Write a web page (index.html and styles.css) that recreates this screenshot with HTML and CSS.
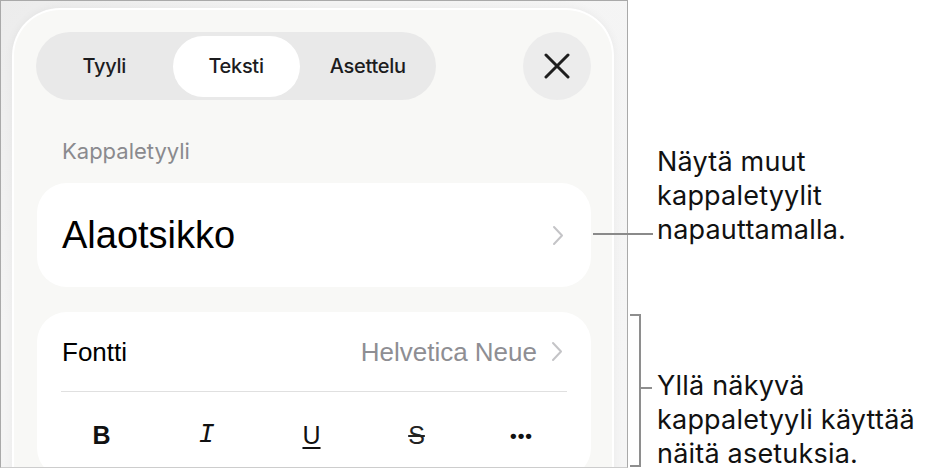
FILE: index.html
```html
<!DOCTYPE html>
<html lang="fi">
<head>
    <meta charset="UTF-8">
    <meta name="viewport" content="width=device-width, initial-scale=1.0">
    <title>Kappaletyyli</title>
    <link rel="stylesheet" href="styles.css">
</head>
<body>
    <div class="figure">
        <div class="shot">
            <div class="sheet">
                <div class="sheet-head">
                    <div class="tabs">
                        <span class="tab">Tyyli</span>
                        <span class="tab active">Teksti</span>
                        <span class="tab">Asettelu</span>
                    </div>
                    <button class="close" aria-label="Sulje">
                        <svg width="26" height="26" viewBox="0 0 26 26">
                            <path d="M2 2 L24 24 M24 2 L2 24" stroke="#1e1e1e" stroke-width="3" stroke-linecap="round" fill="none"/>
                        </svg>
                    </button>
                </div>

                <div class="section-label">Kappaletyyli</div>

                <div class="card style-card">
                    <span class="style-name">Alaotsikko</span>
                    <svg class="chevron" width="12" height="21" viewBox="0 0 12 21">
                        <path d="M2 2 L10 10.5 L2 19" stroke="#c4c4c7" stroke-width="2" stroke-linecap="round" stroke-linejoin="round" fill="none"/>
                    </svg>
                </div>

                <div class="card font-card">
                    <div class="font-row">
                        <span class="font-label">Fontti</span>
                        <span class="font-value">
                            Helvetica Neue
                            <svg class="chevron" width="12" height="21" viewBox="0 0 12 21">
                                <path d="M2 2 L10 10.5 L2 19" stroke="#c4c4c7" stroke-width="2" stroke-linecap="round" stroke-linejoin="round" fill="none"/>
                            </svg>
                        </span>
                    </div>
                    <div class="format-row">
                        <span class="fmt fmt-bold">B</span>
                        <span class="fmt fmt-italic">I</span>
                        <span class="fmt fmt-under">U</span>
                        <span class="fmt fmt-strike">S</span>
                        <span class="fmt fmt-more">•••</span>
                    </div>
                </div>
            </div>
        </div>

        <div class="notes">
            <p class="note note-top">Näytä muut<br>kappaletyylit<br>napauttamalla.</p>
            <p class="note note-bottom">Yllä näkyvä<br>kappaletyyli käyttää<br>näitä asetuksia.</p>
        </div>
    </div>
</body>
</html>
```

FILE: styles.css
```css
body {
    margin: 0;
    background: #fff;
    font-family: Inter, "Noto Sans", sans-serif;
    color: #000;
}
.figure {
    display: flex;
    align-items: flex-start;
}
.shot {
    width: 626px;
    height: 466px;
    border: 1px solid #a9a9a9;
    border-bottom-color: #cdcdcd;
    background: linear-gradient(135deg, #ececec 0%, #f4f4f4 30%, #f5f5f5 100%);
    overflow: hidden;
    flex-shrink: 0;
}
.sheet {
    margin: 7px 0 0 11px;
    width: 602px;
    height: 520px;
    padding: 22px 21px 0 22px;
    box-sizing: border-box;
    background: #f8f8f6;
    border: 2px solid #fff;
    border-bottom: none;
    border-radius: 48px 48px 0 0;
    box-shadow: 0 0 10px rgba(0, 0, 0, 0.05);
}
.sheet-head {
    display: flex;
    justify-content: space-between;
    align-items: center;
    height: 68px;
}
.tabs {
    display: flex;
    align-items: center;
    width: 400px;
    height: 68px;
    padding: 0 4px;
    box-sizing: border-box;
    background: #e9e9e9;
    border-radius: 34px;
}
.tab {
    flex: 1;
    height: 61px;
    display: flex;
    align-items: center;
    justify-content: center;
    font-size: 20px;
    font-weight: 500;
    color: #1c1c1e;
    letter-spacing: -0.3px;
}
.tab.active {
    background: #fff;
    border-radius: 31px;
    flex: 0 0 127px;
    margin: 0 4px;
}
.close {
    width: 68px;
    height: 68px;
    border: none;
    border-radius: 50%;
    background: #ececec;
    display: flex;
    align-items: center;
    justify-content: center;
    padding: 0;
}
.section-label {
    margin: 37px 0 18px 26px;
    font-size: 22px;
    line-height: 28px;
    color: #8a8a8e;
}
.card {
    background: #fff;
    border-radius: 30px;
    margin-left: 1px;
}
.style-card {
    height: 104px;
    display: flex;
    align-items: center;
    justify-content: space-between;
    padding: 0 27px 0 25px;
}
.style-name {
    font-family: "Liberation Sans", Arial, sans-serif;
    font-size: 38px;
    line-height: 38px;
}
.font-card {
    margin-top: 25px;
    padding: 0 24px;
}
.font-row {
    height: 79px;
    display: flex;
    align-items: center;
    justify-content: space-between;
    border-bottom: 1px solid #e0e0e0;
    font-family: "Liberation Sans", Arial, sans-serif;
    font-size: 26px;
    line-height: 26px;
    padding-left: 1px;
}
.font-value {
    display: flex;
    align-items: center;
    gap: 14px;
    color: #8e8e93;
    margin-right: 4px;
}
.format-row {
    display: grid;
    grid-template-columns: repeat(5, 105px);
    margin-left: -12px;
    height: 86px;
    align-items: center;
}
.fmt {
    text-align: center;
    font-family: "Liberation Sans", Arial, sans-serif;
    font-size: 25px;
    line-height: 25px;
    color: #111;
}
.fmt-bold {
    font-weight: 700;
}
.fmt-italic {
    font-family: "Liberation Mono", monospace;
    font-style: italic;
    font-size: 27px;
}
.fmt-under {
    text-decoration: underline;
    text-underline-offset: 3px;
    text-decoration-thickness: 2px;
}
.fmt-strike {
    text-decoration: line-through;
    text-decoration-thickness: 2px;
    color: #222;
}
.fmt-more {
    font-size: 19px;
    letter-spacing: 1px;
    font-weight: 700;
}
.notes {
    display: flex;
    flex-direction: column;
    margin-left: 29px;
}
.note {
    position: relative;
    margin: 0;
    font-size: 27px;
    line-height: 34px;
    color: #111;
    letter-spacing: 0.2px;
    white-space: nowrap;
}
.note-top {
    margin-top: 145px;
}
.note-top::before {
    content: "";
    position: absolute;
    left: -64px;
    top: 88px;
    width: 60px;
    height: 2px;
    background: #8a8a8a;
}
.note-bottom {
    margin-top: 122px;
}
.note-bottom::before {
    content: "";
    position: absolute;
    left: -27px;
    top: -55px;
    width: 9px;
    height: 149px;
    border: 2px solid #8e8e8e;
    border-left: none;
}
.note-bottom::after {
    content: "";
    position: absolute;
    left: -16px;
    top: 18px;
    width: 11px;
    height: 2px;
    background: #8e8e8e;
}
```
